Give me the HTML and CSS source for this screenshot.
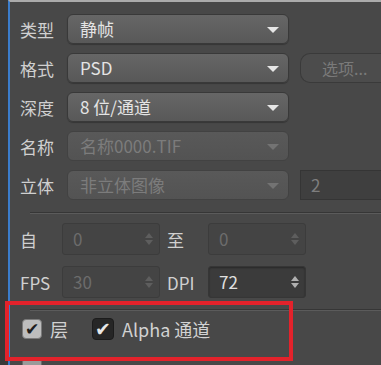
FILE: index.html
```html
<!DOCTYPE html>
<html lang="zh">
<head>
    <meta charset="UTF-8">
    <title>渲染设置 - 保存</title>
    <link rel="stylesheet" href="styles.css">
</head>
<body>
<div class="strip"></div>
<div class="panel">
  <div class="rows">
    <div class="row">
      <span class="label">类型</span>
      <div class="select">静帧<span class="arrow"></span></div>
    </div>
    <div class="row">
      <span class="label">格式</span>
      <div class="select">PSD<span class="arrow"></span></div>
      <div class="opt-button">选项...</div>
    </div>
    <div class="row">
      <span class="label">深度</span>
      <div class="select">8 位/通道<span class="arrow"></span></div>
    </div>
    <div class="row">
      <span class="label">名称</span>
      <div class="select disabled">名称0000.TIF<span class="arrow"></span></div>
    </div>
    <div class="row">
      <span class="label">立体</span>
      <div class="select disabled">非立体图像<span class="arrow"></span></div>
      <div class="field disabled">2</div>
    </div>
  </div>

  <div class="sep"></div>

  <div class="nums">
    <span class="label">自</span>
    <div class="spin disabled">0<span class="updown"></span></div>
    <span class="label second">至</span>
    <div class="spin disabled">0<span class="updown"></span></div>
    <span class="label">FPS</span>
    <div class="spin disabled">30<span class="updown"></span></div>
    <span class="label second">DPI</span>
    <div class="spin">72<span class="updown"></span></div>
  </div>

  <div class="sep sep-low"></div>

  <div class="checks">
    <label class="check"><span class="box light">&#10004;</span>层</label>
    <label class="check"><span class="box dark">&#10004;</span>Alpha 通道</label>
  </div>
  <div class="checks next">
    <span class="box plain"></span>
  </div>
</div>

<!-- red annotation box -->
<div class="mark"></div>
</body>
</html>
```

FILE: styles.css
```css
body {
    margin: 0;
    background: #484848;
    display: flex;
    height: 365px;
    overflow: hidden;
    font-family: "Noto Sans CJK SC", "Noto Sans", sans-serif;
    color: #d2d2d2;
}
.strip {
    width: 8px;
    background: #393939;
    flex: none;
}
.panel {
    flex: 1;
    border-left: 2px solid #3b7dcc;
    border-top: 2px solid #ababab;
    padding: 12px 0 0 10px;
}
.rows {
    display: flex;
    flex-direction: column;
    gap: 9px;
}
.row {
    display: grid;
    grid-template-columns: 47px 222px 1fr;
    align-items: center;
    height: 30px;
}
.label {
    font-size: 17px;
    line-height: 1;
    color: #d0d0d0;
}
.select {
    position: relative;
    height: 28px;
    line-height: 28px;
    padding-left: 12px;
    font-size: 17px;
    color: #e4e4e4;
    border: 1px solid #393939;
    border-radius: 6px;
    background: linear-gradient(#666666, #585858);
    box-shadow: 0 1px 1px rgba(0, 0, 0, 0.25);
}
.select .arrow {
    position: absolute;
    right: 9px;
    top: 12px;
    width: 0;
    height: 0;
    border-left: 6px solid transparent;
    border-right: 6px solid transparent;
    border-top: 6px solid #e6e6e6;
}
.select.disabled {
    color: #7c7c7c;
    background: linear-gradient(#595959, #535353);
    border-color: #424242;
    box-shadow: none;
}
.select.disabled .arrow {
    border-top-color: #737373;
}
.opt-button {
    margin-left: 11px;
    height: 28px;
    line-height: 28px;
    padding-left: 21px;
    font-size: 16px;
    color: #7a7a7a;
    border: 1px solid #3a3a3a;
    border-right: none;
    border-radius: 10px 0 0 10px;
    background: #4c4c4c;
}
.field {
    margin-left: 11px;
    height: 28px;
    line-height: 28px;
    padding-left: 10px;
    font-size: 17px;
    border: 1px solid #353535;
    border-right: none;
    background: #3f3f3f;
    color: #7e7e7e;
}
.sep {
    margin: 12px 0 0 10px;
    border-top: 1px solid #363636;
    border-bottom: 1px solid #5b5b5b;
}
.nums {
    display: grid;
    grid-template-columns: 42px 98px 48px 98px;
    row-gap: 11px;
    align-items: center;
    margin-top: 9px;
}
.nums .second {
    padding-left: 7px;
}
.spin {
    position: relative;
    height: 30px;
    line-height: 30px;
    padding-left: 10px;
    font-size: 17px;
    border: 1px solid #363636;
    border-radius: 3px;
    background: #3b3b3b;
    box-shadow: inset 0 1px 2px rgba(0, 0, 0, 0.35);
    color: #e0e0e0;
}
.spin.disabled {
    color: #6c6c6c;
    background: #444444;
    border-color: #3c3c3c;
    box-shadow: none;
}
.updown {
    position: absolute;
    right: 6px;
    top: 9px;
    width: 0;
    height: 0;
    border-left: 4px solid transparent;
    border-right: 4px solid transparent;
    border-bottom: 5px solid #b0b0b0;
}
.updown::after {
    content: "";
    position: absolute;
    left: -4px;
    top: 7px;
    border-left: 4px solid transparent;
    border-right: 4px solid transparent;
    border-top: 5px solid #b0b0b0;
}
.spin.disabled .updown {
    border-bottom-color: #5e5e5e;
}
.spin.disabled .updown::after {
    border-top-color: #5e5e5e;
}
.sep-low {
    margin-top: 11px;
}
.checks {
    display: flex;
    gap: 24px;
    margin: 8px 0 0 2px;
    height: 20px;
}
.checks.next {
    margin-top: 19px;
}
.check {
    display: flex;
    align-items: center;
    gap: 8px;
    font-size: 18px;
    color: #d2d2d2;
}
.box {
    width: 18px;
    height: 18px;
    border-radius: 4px;
    font-size: 17px;
    line-height: 19px;
    text-align: center;
    font-family: "DejaVu Sans", sans-serif;
}
.box.light {
    background: #bdbdbd;
    color: #1e1e1e;
    border: 1px solid #7a7a7a;
}
.box.dark {
    background: #262626;
    color: #e8e8e8;
    border: 1px solid #1c1c1c;
    width: 20px;
    height: 20px;
    line-height: 21px;
    font-size: 19px;
}
.box.plain {
    background: #9a9a9a;
    border: 1px solid #6a6a6a;
}
.mark {
    position: absolute;
    left: 5px;
    top: 301px;
    width: 280px;
    height: 52px;
    border: 4px solid #e3222b;
}
```
